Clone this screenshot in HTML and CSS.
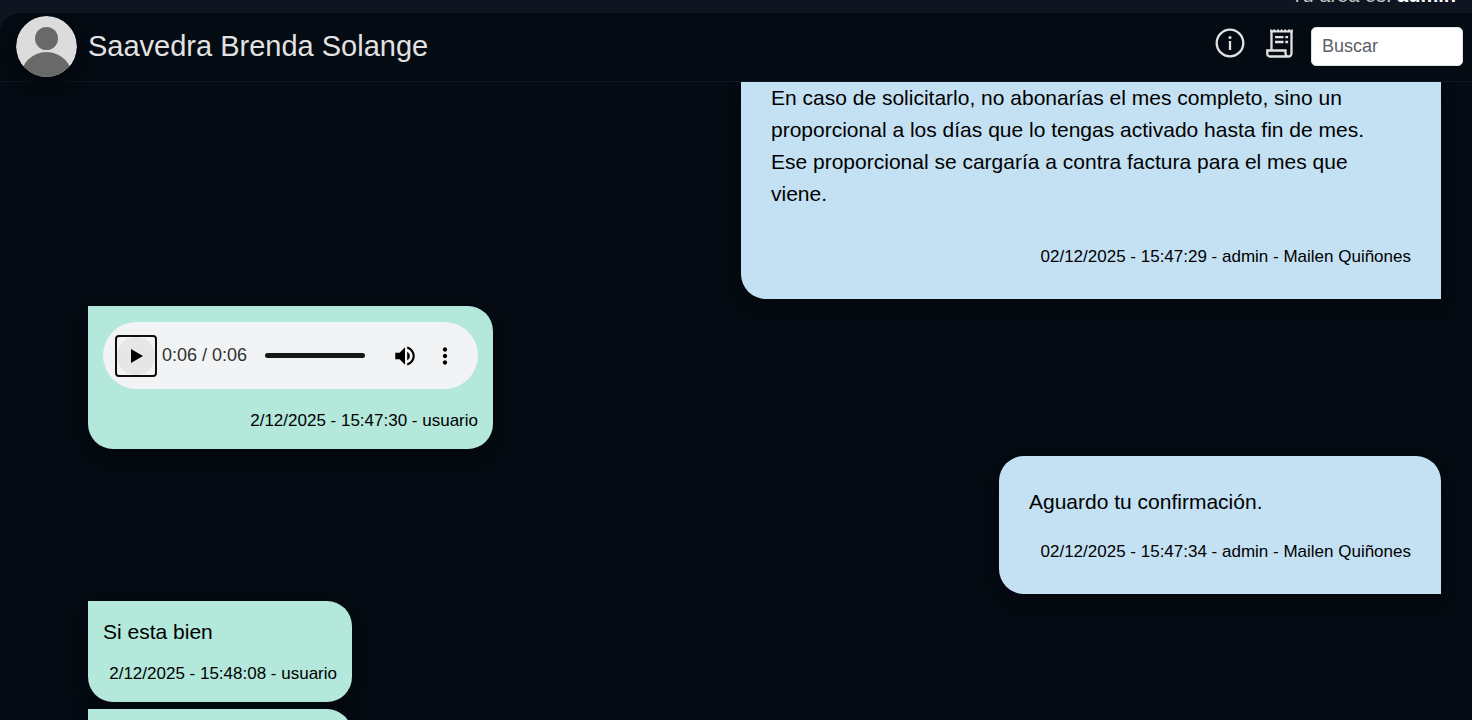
FILE: index.html
```html
<!DOCTYPE html>
<html lang="es">
<head>
<meta charset="utf-8">
<meta name="viewport" content="width=device-width, initial-scale=1">
<title>Chat</title>
<link rel="stylesheet" href="styles.css">
</head>
<body>
<div class="topbar"><p class="area">Tu área es: <strong>admin</strong></p></div>
<main class="panel">
  <header class="chat-header">
    <svg class="avatar" viewBox="0 0 61 61" aria-hidden="true">
      <defs><clipPath id="disc"><circle cx="30.500" cy="30.500" r="30.500"/></clipPath></defs>
      <g clip-path="url(#disc)">
        <rect width="61" height="61" fill="#dcdcdc"/>
        <circle cx="30.500" cy="22.500" r="11.500" fill="#696969"/>
        <circle cx="30.500" cy="62" r="26" fill="#696969"/>
      </g>
    </svg>
    <h1 class="name">Saavedra Brenda Solange</h1>
    <div class="tools">
      <button class="icon-button" type="button" aria-label="Información">
        <svg viewBox="0 0 30 30" width="30" height="30" fill="none" stroke="#e2e2e2" stroke-width="2.300">
          <circle cx="15" cy="15" r="13.300"/>
          <path d="M15 13v9"/><circle cx="15" cy="9.500" r="1.500" fill="#e2e2e2" stroke="none"/>
        </svg>
      </button>
      <button class="icon-button" type="button" aria-label="Factura">
        <svg viewBox="0 0 30 30" width="30" height="30" fill="none" stroke="#e2e2e2" stroke-width="2.300">
          <path d="M6.500 22V1.800M26.500 1.800V25.500a3 3 0 0 1-3 3H5a2.600 2.600 0 0 1-2.700-2.600V22.500H20.500V25.500a3 3 0 0 0 3 3"/>
          <path fill="#e2e2e2" stroke="none" d="M5.400 1l2.100 1.700L9.300 1l1.900 1.700L13 1l1.800 1.700L16.600 1l1.800 1.700L20.200 1l1.900 1.700L24 1l1.800 1.700L27.600 1v3.500H5.400z"/>
          <path d="M10 9.200h8.500M20.300 9.200h2.800M10 14h8.500M20.300 14h2.800"/>
        </svg>
      </button>
      <input class="search" type="search" placeholder="Buscar" aria-label="Buscar">
    </div>
  </header>
  <section class="messages" aria-label="Mensajes">
    <article class="bubble sent continued">
      <p class="text">En caso de solicitarlo, no abonarías el mes completo, sino un<br>proporcional a los días que lo tengas activado hasta fin de mes.<br>Ese proporcional se cargaría a contra factura para el mes que<br>viene.</p>
      <p class="meta">02/12/2025 - 15:47:29 - admin - Mailen Quiñones</p>
    </article>
    <article class="bubble received voice">
      <div class="player">
        <button class="play" type="button" aria-label="Reproducir">
          <svg viewBox="0 0 38 38" width="38" height="38"><circle cx="19" cy="19" r="19" fill="#e5e6e8"/><path d="M14 12v14l12-7z"/></svg>
        </button>
        <span class="time">0:06 / 0:06</span>
        <input class="seek" type="range" min="0" max="6" value="6" aria-label="Posición">
        <button class="player-button" type="button" aria-label="Volumen">
          <svg viewBox="0 0 24 24" width="26" height="26"><path d="M3 9v6h4l5 5V4L7 9H3zm13.500 3A4.500 4.500 0 0 0 14 7.970v8.050c1.480-.73 2.500-2.250 2.500-4.020zM14 3.230v2.060c2.890.86 5 3.540 5 6.710s-2.110 5.850-5 6.710v2.060c4.010-.91 7-4.490 7-8.770s-2.990-7.860-7-8.770z"/></svg>
        </button>
        <button class="player-button" type="button" aria-label="Más opciones">
          <svg viewBox="0 0 24 24" width="26" height="26"><path d="M12 8c1.100 0 2-.9 2-2s-.9-2-2-2-2 .9-2 2 .9 2 2 2zm0 2c-1.100 0-2 .9-2 2s.9 2 2 2 2-.9 2-2-.9-2-2-2zm0 6c-1.100 0-2 .9-2 2s.9 2 2 2 2-.9 2-2-.9-2-2-2z"/></svg>
        </button>
      </div>
      <p class="meta">2/12/2025 - 15:47:30 - usuario</p>
    </article>
    <article class="bubble sent">
      <p class="text">Aguardo tu confirmación.</p>
      <p class="meta">02/12/2025 - 15:47:34 - admin - Mailen Quiñones</p>
    </article>
    <article class="bubble received">
      <p class="text">Si esta bien</p>
      <p class="meta">2/12/2025 - 15:48:08 - usuario</p>
    </article>
    <article class="bubble received empty"></article>
  </section>
</main>
</body>
</html>
```
FILE: styles.css
```css
* { box-sizing: border-box; }
body {
  margin: 0;
  height: 100vh;
  display: flex;
  flex-direction: column;
  overflow: hidden;
  background: #0f1520;
  color: #000;
  font-family: "Liberation Sans", Arial, sans-serif;
}
p, h1 { margin: 0; }
button { padding: 0; border: 0; background: none; cursor: pointer; }
svg { display: block; }
.topbar {
  flex: none;
  height: 13px;
  display: flex;
  justify-content: flex-end;
  align-items: flex-end;
  padding: 0 16px 8px;
  overflow: hidden;
}
.area { color: #c4c6c9; font-size: 20px; line-height: 20px; }
.area strong { color: #fff; }
.panel {
  flex: 1;
  min-height: 0;
  display: flex;
  flex-direction: column;
  background: #040b12;
  border-top-left-radius: 20px;
}
.chat-header {
  flex: none;
  display: flex;
  align-items: center;
  padding: 3px 9px 4px 16px;
  border-bottom: 1px solid #0e151f;
}
.avatar {
  width: 61px;
  height: 61px;
  border-radius: 50%;
  box-shadow: 0 8px 16px #05070e;
}
.name {
  flex: 1;
  margin-left: 11px;
  padding-bottom: 2px;
  color: #e2e2e2;
  font-size: 29px;
  font-weight: 400;
  line-height: 36px;
}
.tools { display: flex; align-items: center; }
.icon-button { margin: 0 20px 7px 0; }
.icon-button + .search { margin-left: -4px; }
.search {
  width: 152px;
  height: 39px;
  padding: 0 10px;
  border: 1px solid #dee2e6;
  border-radius: 5px;
  background: #fff;
  font: 18px "Liberation Sans", Arial, sans-serif;
}
.search::placeholder { color: #5c6167; opacity: 1; }
.messages {
  flex: 1;
  min-height: 0;
  display: flex;
  flex-direction: column;
  gap: 7px;
  padding: 0 31px 0 88px;
  overflow: hidden;
}
.bubble {
  flex: none;
  max-width: 700px;
  box-shadow: 0 8px 16px #05070e;
}
.sent {
  align-self: flex-end;
  min-width: 442px;
  padding: 30px;
  border-radius: 25px 25px 0 25px;
  background: #c4e1f3;
}
.received {
  align-self: flex-start;
  min-width: 264px;
  padding: 15px 15px 16px;
  border-radius: 0 25px 25px 25px;
  background: #b3e8db;
}
.continued {
  width: 700px;
  padding-top: 0;
  border-radius: 0 0 0 25px;
}
.empty { min-height: 100px; }
.text { font-size: 21px; line-height: 32px; }
.meta {
  margin-top: 13px;
  font-size: 17px;
  line-height: 25px;
  text-align: right;
}
.sent .meta { margin-top: 21px; }
.continued .meta { margin-top: 34px; }
.voice .meta { margin-top: 19px; }
.player {
  display: flex;
  align-items: center;
  width: 375px;
  height: 67px;
  margin-top: 1px;
  padding: 0 12px;
  border-radius: 34px;
  background: #f1f3f4;
}
.play {
  width: 42px;
  height: 42px;
  border: 2px solid #101010;
  border-radius: 4px;
}
.time { width: 88px; margin: 0 15px 0 5px; color: #303133; font-size: 18px; white-space: nowrap; }
.seek {
  appearance: none;
  width: 100px;
  height: 5px;
  margin: 0 27px 0 0;
  border-radius: 3px;
  background: #141817;
}
.seek::-webkit-slider-thumb { appearance: none; width: 5px; height: 5px; }
.player-button + .player-button { margin-left: 14px; }
```
